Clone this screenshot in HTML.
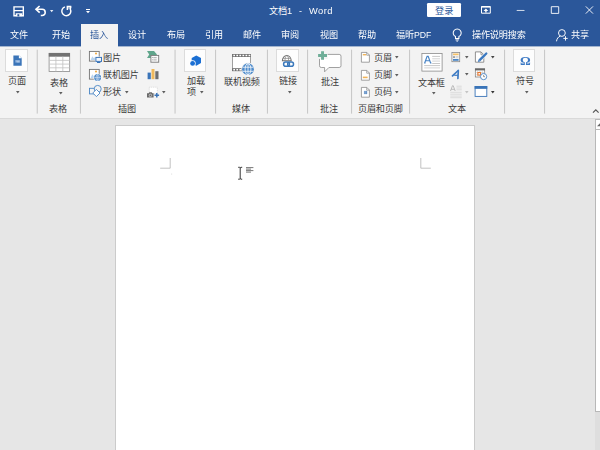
<!DOCTYPE html>
<html lang="zh-CN"><head><meta charset="utf-8"><title>文档1 - Word</title>
<style>
*{box-sizing:border-box;margin:0;padding:0}
html,body{width:600px;height:450px;overflow:hidden;background:#e6e6e6;font-family:"Liberation Sans",sans-serif}
#app{position:relative;width:600px;height:450px;overflow:hidden;background:#e6e6e6}
.titlebar,.tabs,.ribbon,.work{position:absolute;left:0;top:0;width:600px;height:450px}
.titlebar::before{content:"";position:absolute;left:0;top:0;width:600px;height:46px;background:#2b579a;border-bottom:0}
.titlebar::after{content:"";position:absolute;left:0;top:46px;width:600px;height:1px;background:#a3b5cf;z-index:1}
.tab-active{position:absolute;left:81px;top:24px;width:37px;height:23px;background:#f3f3f3;z-index:2}
.ribbon::before{content:"";position:absolute;left:0;top:46px;width:600px;height:72px;background:#f3f3f3;border-bottom:1px solid #d9d9d9}
.lb{position:absolute;display:block;line-height:0;white-space:nowrap}
.lb svg{display:block;fill:currentColor;overflow:visible}
.lb svg text{font-family:"Liberation Sans","Noto Sans CJK SC",sans-serif;font-size:9.15px;letter-spacing:-.15px;fill:currentColor;stroke:none}
.tab{z-index:3}
.lt{position:absolute;display:block;white-space:nowrap;will-change:transform}
.ls{letter-spacing:.5px}
.ic{position:absolute;display:block;overflow:visible}
.sep{position:absolute;top:50px;width:1px;height:63.5px;background:#d1d1d1}
.bbox{position:absolute;top:49.3px;width:22.6px;height:22.4px;background:#fdfdfd;border:.75px solid #dcdcdc}
.login{position:absolute;left:427px;top:3px;width:34.2px;height:14.1px;background:#fff;border-radius:1.2px}
.page{position:absolute;left:115px;top:125px;width:360px;height:330px;background:#fff;border:1px solid #cbcbcb}
.vscroll{position:absolute;left:595px;top:119.3px;width:6px;height:331px;background:#dedede}
.sb-up{position:absolute;left:0;top:0;width:6px;height:10.7px;background:#fff;border:.8px solid #b8b8b8}
.sb-thumb{position:absolute;left:0;top:10.7px;width:6px;height:282px;background:#fff;border:.8px solid #b8b8b8;border-top:none}
</style></head>
<body>
<div id="app">
<div class="titlebar">
<svg class="ic " style="left:12px;top:5px" width="14" height="13" viewBox="12 5 14 13" aria-hidden="true">
<path d="M14 6.9h9.3v8.8H14z" fill="none" stroke="#fff" stroke-width="1.4"/>
<path d="M14 10h9.3v1.25H14z" fill="#fff"/>
<path d="M15.7 13.2h6.6v3h-6.6z" fill="#fff"/>
<path d="M17.4 14.2h1.9v2.2h-1.9z" fill="#2b579a"/>
</svg>
<svg class="ic " style="left:34px;top:5px" width="14" height="12" viewBox="34 5 14 12" aria-hidden="true">
<path d="M39.6 6L36 9.3l3.7 3.3" fill="none" stroke="#fff" stroke-width="1.65" stroke-linejoin="miter"/>
<path d="M36.4 9.3h5.7a3.1 3.1 0 0 1 0 6.2h-1.3" fill="none" stroke="#fff" stroke-width="1.6"/>
</svg>
<svg class="ic arr" style="left:48.6px;top:8.6px" width="5.4" height="4.2" viewBox="48.6 8.6 5.4 4.2" aria-hidden="true"><path d="M49.6 9.6h3.4l-1.7 2.2z" fill="#e8eef7"/></svg>
<svg class="ic " style="left:60px;top:5px" width="13" height="12" viewBox="60 5 13 12" aria-hidden="true">
<path d="M64.9 6.9A4.5 4.5 0 1 0 70.3 9.1L70.8 6.6" fill="none" stroke="#fff" stroke-width="1.45" stroke-linejoin="round"/>
<path d="M67.3 10.1V6.5H71.3" fill="none" stroke="#fff" stroke-width="1.35"/>
<path d="M67.3 6.5h3.6l-.5 2.3-3.1 1z" fill="#fff" opacity=".45"/>
</svg>
<svg class="ic " style="left:85px;top:8px" width="6" height="6" viewBox="85 8 6 6" aria-hidden="true"><path d="M86 9h4v.9h-4zM86 11h4l-2 2.3z" fill="#fff"/></svg>
<span class="lb " style="left:268px;top:6.42px;color:#fff"><svg width="20" height="10.98"><text x="0.92" y="8.05" font-size="9.15">文档</text></svg></span>
<span class="lt " style="left:287.4px;top:5.75px;color:#fff;font-size:9.3px;line-height:10.7px;font-weight:400;font-family:'Liberation Sans',sans-serif">1</span>
<span class="lt " style="left:298.9px;top:5.83px;color:#fff;font-size:9px;line-height:10.35px;font-weight:400;font-family:'Liberation Sans',sans-serif">-</span>
<span class="lt ls" style="left:308.9px;top:5.75px;color:#fff;font-size:9.3px;line-height:10.7px;font-weight:400;font-family:'Liberation Sans',sans-serif">Word</span>
<div class="login"></div>
<span class="lb " style="left:433.6px;top:5.83px;color:#2b579a"><svg width="20.6" height="10.98"><text x="1.08" y="8.05" font-size="9.15" style="letter-spacing:.15px">登录</text></svg></span>
<svg class="ic " style="left:480px;top:5px" width="12" height="10" viewBox="480 5 12 10" aria-hidden="true">
<path d="M481.5 6.5h8.8v6.7h-8.8z" fill="none" stroke="#fff" stroke-width="1"/>
<path d="M481.5 6.2h8.8v1.4h-8.8z" fill="#fff"/>
<path d="M485.9 8.6l2.4 2.3h-1.7v1.6h-1.4v-1.6h-1.7z" fill="#fff"/>
</svg>
<svg class="ic " style="left:516px;top:9px" width="10" height="3" viewBox="516 9 10 3" aria-hidden="true"><path d="M516.7 9.950h7.8v.8h-7.8z" fill="#fff"/></svg>
<svg class="ic " style="left:550px;top:5px" width="10" height="10" viewBox="550 5 10 10" aria-hidden="true"><path d="M551.3 6.7h7.4v6.7h-7.4z" fill="none" stroke="#fff" stroke-width=".9"/></svg>
<svg class="ic " style="left:585px;top:5px" width="10" height="10" viewBox="585 5 10 10" aria-hidden="true"><path d="M585.8 6.4l7.2 7.2M593 6.4l-7.2 7.2" fill="none" stroke="#fff" stroke-width=".9"/></svg>
</div>
<div class="tabs">
<div class="tab-active"></div>
<span class="lb tab" style="left:8.6px;top:29.82px;color:#fff"><svg width="20" height="10.98"><text x="0.92" y="8.05" font-size="9.15">文件</text></svg></span>
<span class="lb tab" style="left:50.8px;top:29.82px;color:#fff"><svg width="20" height="10.98"><text x="0.92" y="8.05" font-size="9.15">开始</text></svg></span>
<span class="lb tab" style="left:89.05px;top:29.82px;color:#2b579a"><svg width="20" height="10.98"><text x="0.92" y="8.05" font-size="9.15">插入</text></svg></span>
<span class="lb tab" style="left:127.3px;top:29.82px;color:#fff"><svg width="20" height="10.98"><text x="0.92" y="8.05" font-size="9.15">设计</text></svg></span>
<span class="lb tab" style="left:165.55px;top:29.82px;color:#fff"><svg width="20" height="10.98"><text x="0.92" y="8.05" font-size="9.15">布局</text></svg></span>
<span class="lb tab" style="left:203.8px;top:29.82px;color:#fff"><svg width="20" height="10.98"><text x="0.92" y="8.05" font-size="9.15">引用</text></svg></span>
<span class="lb tab" style="left:242.05px;top:29.82px;color:#fff"><svg width="20" height="10.98"><text x="0.92" y="8.05" font-size="9.15">邮件</text></svg></span>
<span class="lb tab" style="left:280.3px;top:29.82px;color:#fff"><svg width="20" height="10.98"><text x="0.92" y="8.05" font-size="9.15">审阅</text></svg></span>
<span class="lb tab" style="left:318.55px;top:29.82px;color:#fff"><svg width="20" height="10.98"><text x="0.92" y="8.05" font-size="9.15">视图</text></svg></span>
<span class="lb tab" style="left:356.8px;top:29.82px;color:#fff"><svg width="20" height="10.98"><text x="0.92" y="8.05" font-size="9.15">帮助</text></svg></span>
<span class="lb tab" style="left:394.7px;top:29.82px;color:#fff"><svg width="20" height="10.98"><text x="0.92" y="8.05" font-size="9.15">福昕</text></svg></span>
<span class="lt " style="left:414.2px;top:29.5px;color:#fff;font-size:8.7px;line-height:10px;font-weight:400;font-family:'Liberation Sans',sans-serif">PDF</span>
<svg class="ic " style="left:451px;top:28px" width="12" height="15" viewBox="451 28 12 15" aria-hidden="true">
<path d="M455.5 36.6A4 4 0 1 1 458.9 36.6V38.5H455.5z" fill="none" stroke="#fff" stroke-width="1.05"/>
<path d="M455.5 39.9h3.4M456.4 41.1h1.6" stroke="#fff" stroke-width=".9" fill="none"/>
</svg>
<span class="lb tab" style="left:471.1px;top:29.82px;color:#fff"><svg width="56" height="10.98"><text x="0.92" y="8.05" font-size="9.15">操作说明搜索</text></svg></span>
<svg class="ic " style="left:555px;top:28px" width="14" height="15" viewBox="555 28 14 15" aria-hidden="true">
<circle cx="561.9" cy="33" r="3.4" fill="none" stroke="#fff" stroke-width=".95"/>
<path d="M556.5 41.3c.3-2.6 1.7-4.5 3.9-5.2" fill="none" stroke="#fff" stroke-width=".95"/>
<path d="M563.3 38.4h4.4M565.5 36.2v4.4" stroke="#fff" stroke-width=".95" fill="none"/>
</svg>
<span class="lb tab" style="left:570.1px;top:29.82px;color:#fff"><svg width="20" height="10.98"><text x="0.92" y="8.05" font-size="9.15">共享</text></svg></span>
</div>
<div class="ribbon">
<svg class="ic seps" style="left:0px;top:49px" width="600" height="66" viewBox="0 49 600 66" aria-hidden="true"><rect x="36.7" y="49.7" width="1.1" height="63.9" fill="#c9c9c9"/><rect x="79.9" y="49.7" width="1.1" height="63.9" fill="#c9c9c9"/><rect x="174.5" y="49.7" width="1.1" height="63.9" fill="#c9c9c9"/><rect x="215" y="49.7" width="1.1" height="63.9" fill="#c9c9c9"/><rect x="266.9" y="49.7" width="1.1" height="63.9" fill="#c9c9c9"/><rect x="307" y="49.7" width="1.1" height="63.9" fill="#c9c9c9"/><rect x="351" y="49.7" width="1.1" height="63.9" fill="#c9c9c9"/><rect x="409" y="49.7" width="1.1" height="63.9" fill="#c9c9c9"/><rect x="504" y="49.7" width="1.1" height="63.9" fill="#c9c9c9"/><rect x="544" y="49.7" width="1.1" height="63.9" fill="#c9c9c9"/></svg>
<div class="bbox" style="left:5.1px"></div>
<svg class="ic " style="left:12px;top:54px" width="12" height="13" viewBox="12 54 12 13" aria-hidden="true">
<path d="M13.4 55.4h5.6l2.7 2.7v7.6h-8.3z" fill="#3a74b8"/>
<path d="M18.9 55.3v2.9h2.9z" fill="#f8fbff"/>
<path d="M15.1 60h5.1v2.7h-5.1z" fill="#6f9bd1"/>
<path d="M15.7 60.7h3.9v.5h-3.9zM16.6 61.7h3v.5h-3z" fill="#e6eef8"/>
</svg>
<span class="lb " style="left:7.25px;top:75.72px;color:#3b3b3b"><svg width="20" height="10.98"><text x="0.92" y="8.05" font-size="9.15">页面</text></svg></span>
<svg class="ic arr" style="left:15.2px;top:89.5px" width="5.6" height="4.4" viewBox="15.2 89.5 5.6 4.4" aria-hidden="true"><path d="M16.2 90.5h3.6l-1.8 2.4z" fill="#5e5e5e"/></svg>
<svg class="ic " style="left:48px;top:52px" width="23" height="21" viewBox="48 52 23 21" aria-hidden="true">
<rect x="49.1" y="53.3" width="20.6" height="18.1" fill="#fff" stroke="#8a8a8a" stroke-width=".8"/>
<rect x="48.8" y="53" width="21.2" height="3.7" fill="#737373"/>
<path d="M49.2 60.4h20.4M49.2 64.1h20.4M49.2 67.8h20.4M55.9 56.6v14.8M62.8 56.6v14.8" stroke="#c2c2c2" stroke-width=".8" fill="none"/>
</svg>
<span class="lb " style="left:49px;top:77.62px;color:#3b3b3b"><svg width="20" height="10.98"><text x="0.92" y="8.05" font-size="9.15">表格</text></svg></span>
<svg class="ic arr" style="left:57.5px;top:91.1px" width="5.6" height="4.4" viewBox="57.5 91.1 5.6 4.4" aria-hidden="true"><path d="M58.5 92.1h3.6l-1.8 2.4z" fill="#5e5e5e"/></svg>
<span class="lb grp" style="left:48.3px;top:104.33px;color:#3b3b3b"><svg width="20" height="10.98"><text x="0.92" y="8.05" font-size="9.15">表格</text></svg></span>
<svg class="ic " style="left:88px;top:50px" width="15" height="15" viewBox="88 50 15 15" aria-hidden="true">
<rect x="89.4" y="51.4" width="9.8" height="9.7" fill="#fff" stroke="#727272" stroke-width=".9"/>
<circle cx="96" cy="53.6" r="1" fill="#f0a63a"/>
<path d="M90.6 59.9l1.7-3.6 1.2 1.8 .9-.9 1.4 2.7z" fill="#b9d3ee"/>

<rect x="95.2" y="56.6" width="6.6" height="5.3" fill="#fff"/>
<rect x="95.9" y="57.4" width="5.6" height="4" fill="#f3f7fc" stroke="#3a74b8" stroke-width="1"/>
<path d="M97 62h3.4v1h-3.4z" fill="#3a74b8"/>
</svg>
<span class="lb " style="left:102.1px;top:52.52px;color:#3b3b3b"><svg width="20" height="10.98"><text x="0.92" y="8.05" font-size="9.15">图片</text></svg></span>
<svg class="ic " style="left:88px;top:67.5px" width="15" height="15" viewBox="88 67.5 15 15" aria-hidden="true">
<rect x="89.4" y="68.9" width="9.8" height="9.7" fill="#fff" stroke="#727272" stroke-width=".9"/>
<circle cx="96" cy="71.1" r="1" fill="#f0a63a"/>
<path d="M90.6 77.4l1.7-3.6 1.2 1.8 .9-.9 1.4 2.7z" fill="#b9d3ee"/>

<circle cx="97.6" cy="77.1" r="4.1" fill="#fff"/>
<circle cx="97.6" cy="77.1" r="3.5" fill="#4a86c5"/>
<path d="M94.3 77.1h6.6M97.6 73.8v6.6" stroke="#dfeaf6" stroke-width=".6" fill="none"/>
<ellipse cx="97.6" cy="77.1" rx="1.5" ry="3.3" fill="none" stroke="#dfeaf6" stroke-width=".6"/>
</svg>
<span class="lb " style="left:102.1px;top:70.02px;color:#3b3b3b"><svg width="38" height="10.98"><text x="0.92" y="8.05" font-size="9.15">联机图片</text></svg></span>
<svg class="ic " style="left:88px;top:84px" width="15" height="14" viewBox="88 84 15 14" aria-hidden="true">
<rect x="89.5" y="88.3" width="6.6" height="5.6" fill="none" stroke="#4a86c5" stroke-width=".9"/>
<circle cx="97.7" cy="88.9" r="3.5" fill="#f3f3f3" stroke="#4a86c5" stroke-width=".9"/>
<path d="M96.4 89.4l3.6 3.6-3.6 3.6-3.6-3.6z" fill="#fff" stroke="#4a86c5" stroke-width=".9"/>
</svg>
<span class="lb " style="left:102.1px;top:87.02px;color:#3b3b3b"><svg width="20" height="10.98"><text x="0.92" y="8.05" font-size="9.15">形状</text></svg></span>
<svg class="ic arr" style="left:123.5px;top:90px" width="5.6" height="4.4" viewBox="123.5 90 5.6 4.4" aria-hidden="true"><path d="M124.5 91h3.6l-1.8 2.4z" fill="#5e5e5e"/></svg>
<svg class="ic " style="left:146px;top:50px" width="14" height="14" viewBox="146 50 14 14" aria-hidden="true">
<path d="M147 51h7l3 3.5-1.5 1.7H151v1.8h-4l2.2-3.5z" fill="#5fa58b"/>
<rect x="150.9" y="55.4" width="7.8" height="6.8" fill="#fbfbfb" stroke="#7a7a7a" stroke-width=".9"/>
<path d="M153.3 57.7h3.4M153.3 59.9h3.4" stroke="#8a8a8a" stroke-width=".7" fill="none"/>
<path d="M152.2 57.3h.8v.8h-.8zM152.2 59.5h.8v.8h-.8z" fill="#8a8a8a"/>
</svg>
<svg class="ic " style="left:146px;top:68px" width="14" height="12" viewBox="146 68 14 12" aria-hidden="true">
<rect x="147.6" y="72.6" width="3.2" height="6.6" fill="#3a74b8"/>
<rect x="151.5" y="69" width="3" height="10.2" fill="#f0b95c"/>
<rect x="155.3" y="71.2" width="3.2" height="8" fill="#6e6e6e"/>
</svg>
<svg class="ic " style="left:146px;top:86px" width="14" height="13" viewBox="146 86 14 13" aria-hidden="true">
<rect x="149.3" y="87.2" width="8" height="6.2" fill="#fff" stroke="#c9c9c9" stroke-width=".6" stroke-dasharray="1 .8"/>
<path d="M147 93.3h1.6l.7-1.1h2.4l.7 1.1h1.2v4.3H147z" fill="#6a6a6a"/>
<circle cx="150.4" cy="95.4" r="1.25" fill="none" stroke="#eee" stroke-width=".6"/>
<path d="M154.5 95.3h4.6M156.8 93v4.6" stroke="#3a74b8" stroke-width="1.5" fill="none"/>
</svg>
<svg class="ic arr" style="left:161px;top:89.5px" width="5.6" height="4.4" viewBox="161 89.5 5.6 4.4" aria-hidden="true"><path d="M162 90.5h3.6l-1.8 2.4z" fill="#5e5e5e"/></svg>
<span class="lb grp" style="left:117.3px;top:104.33px;color:#3b3b3b"><svg width="20" height="10.98"><text x="0.92" y="8.05" font-size="9.15">插图</text></svg></span>
<div class="bbox" style="left:183.9px"></div>
<svg class="ic " style="left:190px;top:54px" width="13" height="13" viewBox="190 54 13 13" aria-hidden="true">
<path d="M196.3 55.4l4.7 2.5v5.2l-4.7 2.6-4.6-2.6v-5.2z" fill="#1b6fd3"/>
<circle cx="192.6" cy="63.4" r="3.1" fill="#fff"/>
<circle cx="192.6" cy="63.4" r="2.4" fill="#1b6fd3"/>
</svg>
<span class="lb " style="left:185.5px;top:75.72px;color:#3b3b3b"><svg width="20" height="10.98"><text x="0.92" y="8.05" font-size="9.15">加载</text></svg></span>
<span class="lb " style="left:186.1px;top:87.02px;color:#3b3b3b"><svg width="11" height="10.98"><text x="0.92" y="8.05" font-size="9.15">项</text></svg></span>
<svg class="ic arr" style="left:198.5px;top:89.5px" width="5.6" height="4.4" viewBox="198.5 89.5 5.6 4.4" aria-hidden="true"><path d="M199.5 90.5h3.6l-1.8 2.4z" fill="#5e5e5e"/></svg>
<svg class="ic " style="left:231px;top:53px" width="24" height="23" viewBox="231 53 24 23" aria-hidden="true">
<rect x="232.5" y="54.5" width="18.1" height="16.2" fill="#fff" stroke="#8a8a8a" stroke-width=".8"/>
<rect x="232.1" y="54.1" width="18.9" height="2.9" fill="#6e6e6e"/>
<rect x="232.1" y="68.2" width="18.9" height="2.9" fill="#6e6e6e"/>
<path d="M233.3 55.55h17.5" stroke="#fff" stroke-width="1.5" stroke-dasharray="1.75 1.3" fill="none"/>
<path d="M233.3 69.65h17.5" stroke="#fff" stroke-width="1.5" stroke-dasharray="1.75 1.3" fill="none"/>
<circle cx="248" cy="69.2" r="6.7" fill="#f3f3f3"/>
<circle cx="248" cy="69.2" r="5.9" fill="#4f8ccc"/>
<path d="M242.6 67.2h10.8M242.6 71.3h10.8M248 63.5v11.4" stroke="#f4f8fc" stroke-width=".85" fill="none"/>
<ellipse cx="248" cy="69.2" rx="2.9" ry="5.6" fill="none" stroke="#f4f8fc" stroke-width=".85"/>
</svg>
<span class="lb " style="left:222.5px;top:77.22px;color:#3b3b3b"><svg width="38" height="10.98"><text x="0.92" y="8.05" font-size="9.15">联机视频</text></svg></span>
<span class="lb grp" style="left:231.05px;top:104.33px;color:#3b3b3b"><svg width="20" height="10.98"><text x="0.92" y="8.05" font-size="9.15">媒体</text></svg></span>
<div class="bbox" style="left:276.4px"></div>
<svg class="ic " style="left:281px;top:54px" width="14" height="14" viewBox="281 54 14 14" aria-hidden="true">
<path d="M282.4 60.8a4.4 5.4 0 0 1 8.8 0z" fill="#fff" stroke="#6e6e6e" stroke-width="1.05"/>
<path d="M284.9 60.8a1.9 5.2 0 0 1 3.8 0M282.9 58.4h7.8" fill="none" stroke="#8a8a8a" stroke-width=".75"/>
<rect x="283.6" y="62.1" width="5.8" height="4.1" rx="2.05" fill="none" stroke="#3a78bb" stroke-width="1.5"/>
<rect x="287.7" y="62.1" width="5.8" height="4.1" rx="2.05" fill="none" stroke="#3a78bb" stroke-width="1.5"/>
</svg>
<span class="lb " style="left:278px;top:75.72px;color:#3b3b3b"><svg width="20" height="10.98"><text x="0.92" y="8.05" font-size="9.15">链接</text></svg></span>
<svg class="ic arr" style="left:286.5px;top:89.5px" width="5.6" height="4.4" viewBox="286.5 89.5 5.6 4.4" aria-hidden="true"><path d="M287.5 90.5h3.6l-1.8 2.4z" fill="#5e5e5e"/></svg>
<svg class="ic " style="left:317px;top:50px" width="26" height="24" viewBox="317 50 26 24" aria-hidden="true">
<path d="M321.3 54.4h17.9a1.8 1.8 0 0 1 1.8 1.8v9.5a1.8 1.8 0 0 1 -1.8 1.8h-10.3l-4.3 4.3v-4.3h-3.3a1.8 1.8 0 0 1 -1.8 -1.8v-9.5a1.8 1.8 0 0 1 1.8 -1.8z" fill="#fff" stroke="#8a8a8a" stroke-width=".8"/>
<path d="M317.3 51.6h10.3v7.3h-10.3z" fill="#f3f3f3"/>
<path d="M321.1 51.2h2.9v2.8h3v2.9h-3v2.8h-2.9v-2.8h-3v-2.9h3z" fill="#6fae98"/>
</svg>
<span class="lb " style="left:320px;top:77.22px;color:#3b3b3b"><svg width="20" height="10.98"><text x="0.92" y="8.05" font-size="9.15">批注</text></svg></span>
<span class="lb grp" style="left:319.3px;top:104.33px;color:#3b3b3b"><svg width="20" height="10.98"><text x="0.92" y="8.05" font-size="9.15">批注</text></svg></span>
<svg class="ic " style="left:360px;top:51px" width="11" height="13" viewBox="360 51 11 13" aria-hidden="true"><path d="M361.4 52.4h5.4l2.6 2.6v7.2h-8z" fill="#fff" stroke="#8a8a8a" stroke-width=".8"/><path d="M366.7 52.5v2.7h2.7" fill="none" stroke="#8a8a8a" stroke-width=".7"/><rect x="362.8" y="54" width="3.3" height="1.4" fill="#f0b45a"/></svg>
<span class="lb " style="left:373.1px;top:52.72px;color:#3b3b3b"><svg width="20" height="10.98"><text x="0.92" y="8.05" font-size="9.15">页眉</text></svg></span>
<svg class="ic arr" style="left:394.3px;top:55.2px" width="5.6" height="4.4" viewBox="394.3 55.2 5.6 4.4" aria-hidden="true"><path d="M395.3 56.2h3.6l-1.8 2.4z" fill="#5e5e5e"/></svg>
<svg class="ic " style="left:360px;top:68.5px" width="11" height="13" viewBox="360 68.5 11 13" aria-hidden="true"><path d="M361.4 69.9h5.4l2.6 2.6v7.2h-8z" fill="#fff" stroke="#8a8a8a" stroke-width=".8"/><path d="M366.7 70v2.7h2.7" fill="none" stroke="#8a8a8a" stroke-width=".7"/><rect x="362.8" y="76.1" width="4.8" height="1.6" fill="#f0b45a"/></svg>
<span class="lb " style="left:373.1px;top:70.22px;color:#3b3b3b"><svg width="20" height="10.98"><text x="0.92" y="8.05" font-size="9.15">页脚</text></svg></span>
<svg class="ic arr" style="left:394.3px;top:72.7px" width="5.6" height="4.4" viewBox="394.3 72.7 5.6 4.4" aria-hidden="true"><path d="M395.3 73.7h3.6l-1.8 2.4z" fill="#5e5e5e"/></svg>
<svg class="ic " style="left:360px;top:85.5px" width="11" height="13" viewBox="360 85.5 11 13" aria-hidden="true"><path d="M361.4 86.9h5.4l2.6 2.6v7.2h-8z" fill="#fff" stroke="#8a8a8a" stroke-width=".8"/><path d="M366.7 87v2.7h2.7" fill="none" stroke="#8a8a8a" stroke-width=".7"/><path d="M364.9 90.3v3.4M366.3 90.3v3.4M363.9 91.4h3.4M363.9 92.7h3.4" stroke="#3a74b8" stroke-width=".7" fill="none"/></svg>
<span class="lb " style="left:373.1px;top:87.22px;color:#3b3b3b"><svg width="20" height="10.98"><text x="0.92" y="8.05" font-size="9.15">页码</text></svg></span>
<svg class="ic arr" style="left:394.3px;top:89.7px" width="5.6" height="4.4" viewBox="394.3 89.7 5.6 4.4" aria-hidden="true"><path d="M395.3 90.7h3.6l-1.8 2.4z" fill="#5e5e5e"/></svg>
<span class="lb grp" style="left:356.55px;top:104.33px;color:#3b3b3b"><svg width="47" height="10.98"><text x="0.92" y="8.05" font-size="9.15">页眉和页脚</text></svg></span>
<svg class="ic " style="left:420px;top:52px" width="24" height="21" viewBox="420 52 24 21" aria-hidden="true">
<rect x="421.9" y="53.4" width="20.2" height="17.7" fill="#fff" stroke="#8a8a8a" stroke-width=".8"/>
<path d="M432.2 56.4h7.9M432.2 63.5h7.9M424.2 65.6h15.9" stroke="#b9b9b9" stroke-width=".8" fill="none"/><path d="M432.2 58.8h7.9M432.2 61.1h7.9M424.2 67.9h15.9" stroke="#cfcfcf" stroke-width=".9" fill="none"/>
<path d="M424.7 63l2.4-6.7h1.1l2.4 6.7M425.7 60.7h3.9M424.1 63h1.5M430 63h1.5" fill="none" stroke="#4784c6" stroke-width="1.15"/>
</svg>
<span class="lb " style="left:417px;top:77.62px;color:#3b3b3b"><svg width="29" height="10.98"><text x="0.92" y="8.05" font-size="9.15">文本框</text></svg></span>
<svg class="ic arr" style="left:430.5px;top:91px" width="5.6" height="4.4" viewBox="430.5 91 5.6 4.4" aria-hidden="true"><path d="M431.5 92h3.6l-1.8 2.4z" fill="#5e5e5e"/></svg>
<svg class="ic " style="left:450px;top:51px" width="12" height="13" viewBox="450 51 12 13" aria-hidden="true">
<rect x="451.9" y="52.4" width="7.8" height="9.3" fill="#f7f7f7" stroke="#8a8a8a" stroke-width=".8"/>
<rect x="453" y="53.5" width="5.6" height="1.7" fill="#f5c169"/>
<rect x="453" y="59" width="5.6" height="1.8" fill="#4a86c5"/>
<rect x="453.2" y="56.2" width="1.6" height="1.8" fill="#8a8a8a"/>
<path d="M455.6 56.5h2.8M455.6 57.7h2.8" stroke="#b5b5b5" stroke-width=".5"/>
</svg>
<svg class="ic arr" style="left:464px;top:55.1px" width="5.6" height="4.4" viewBox="464 55.1 5.6 4.4" aria-hidden="true"><path d="M465 56.1h3.6l-1.8 2.4z" fill="#5e5e5e"/></svg>
<svg class="ic " style="left:474px;top:50px" width="14" height="14" viewBox="474 50 14 14" aria-hidden="true">
<path d="M475.4 51.9h5.6l2.8 2.8v7.5h-8.4z" fill="#fff" stroke="#777" stroke-width=".8"/>
<path d="M481 52v2.8h2.8" fill="none" stroke="#777" stroke-width=".7"/>
<path d="M479.4 60.4L486 53.8" stroke="#f3f3f3" stroke-width="3.3" fill="none"/>
<path d="M479.4 60.4L485.2 54.6" stroke="#3a78c0" stroke-width="2.3" fill="none"/>
<path d="M485.6 54.2l.7-.7" stroke="#3a78c0" stroke-width="2.3" stroke-linecap="round" fill="none"/>
<path d="M477.9 61.9l.6-2.5 1.9 1.9z" fill="#3a78c0"/>
</svg>
<svg class="ic arr" style="left:490.2px;top:55.1px" width="5.6" height="4.4" viewBox="490.2 55.1 5.6 4.4" aria-hidden="true"><path d="M491.2 56.1h3.6l-1.8 2.4z" fill="#444"/></svg>
<svg class="ic " style="left:450px;top:68px" width="12" height="12" viewBox="450 68 12 12" aria-hidden="true">
<path d="M452.5 75.9L458.2 70.5" stroke="#3f7cc4" stroke-width="1.7" stroke-linecap="round" fill="none"/>
<path d="M458.3 70.5L457.9 78.5" stroke="#3f7cc4" stroke-width="1.7" stroke-linecap="round" fill="none"/>
<path d="M454.2 75.3h3.8" stroke="#3f7cc4" stroke-width="1.2" fill="none"/>
</svg>
<svg class="ic arr" style="left:464px;top:72.1px" width="5.6" height="4.4" viewBox="464 72.1 5.6 4.4" aria-hidden="true"><path d="M465 73.1h3.6l-1.8 2.4z" fill="#5e5e5e"/></svg>
<svg class="ic " style="left:474px;top:67px" width="15" height="14" viewBox="474 67 15 14" aria-hidden="true">
<rect x="475.3" y="68.8" width="9.4" height="8.2" fill="#fff" stroke="#777" stroke-width=".7"/>
<rect x="475" y="68.5" width="10" height="1.9" fill="#666"/>
<path d="M475.5 72.6h9M475.5 74.8h9M477.6 70.5v6.3M479.9 70.5v6.3M482.3 70.5v6.3" stroke="#bbb" stroke-width=".5" fill="none"/>
<rect x="477.9" y="72.5" width="2.6" height="2.6" fill="#fff" stroke="#e8772e" stroke-width="1.1"/>
<circle cx="483.6" cy="76.6" r="3.1" fill="#fff" stroke="#4a86c5" stroke-width=".9"/>
<path d="M483.6 74.9v1.8h1.4" stroke="#555" stroke-width=".6" fill="none"/>
</svg>
<svg class="ic " style="left:449px;top:84px" width="14" height="15" viewBox="449 84 14 15" aria-hidden="true">
<path d="M450.5 91l2-5.3h.7l2 5.3M451.2 89.3h3.3" fill="none" stroke="#b2b2b2" stroke-width=".85"/>
<path d="M456.5 86.2h5.2M456.5 88h5.2M456.5 89.8h5.2M450.3 92.3h11.4M450.3 94.2h11.4M450.3 96.1h11.4M450.3 97.7h11.4" stroke="#d4d4d4" stroke-width=".8" fill="none"/>
</svg>
<svg class="ic arr" style="left:464px;top:89.5px" width="5.6" height="4.4" viewBox="464 89.5 5.6 4.4" aria-hidden="true"><path d="M465 90.5h3.6l-1.8 2.4z" fill="#c4c4c4"/></svg>
<svg class="ic " style="left:474px;top:85px" width="14" height="13" viewBox="474 85 14 13" aria-hidden="true">
<rect x="475.1" y="86.5" width="11.7" height="9.9" fill="#fff" stroke="#3a74b8" stroke-width=".9"/>
<rect x="474.65" y="86.05" width="12.6" height="2.8" fill="#3a74b8"/>
</svg>
<svg class="ic arr" style="left:490.2px;top:89.5px" width="5.6" height="4.4" viewBox="490.2 89.5 5.6 4.4" aria-hidden="true"><path d="M491.2 90.5h3.6l-1.8 2.4z" fill="#333"/></svg>
<span class="lb grp" style="left:446.8px;top:104.33px;color:#3b3b3b"><svg width="20" height="10.98"><text x="0.92" y="8.05" font-size="9.15">文本</text></svg></span>
<div class="bbox" style="left:512.9px"></div>
<span class="lt omega" style="left:519.5px;top:53.09px;color:#3b78c3;font-size:13.4px;line-height:15.41px;font-weight:700;font-family:'Liberation Serif',serif">Ω</span>
<span class="lb " style="left:514.75px;top:75.72px;color:#3b3b3b"><svg width="20" height="10.98"><text x="0.92" y="8.05" font-size="9.15">符号</text></svg></span>
<svg class="ic arr" style="left:523.5px;top:89.5px" width="5.6" height="4.4" viewBox="523.5 89.5 5.6 4.4" aria-hidden="true"><path d="M524.5 90.5h3.6l-1.8 2.4z" fill="#5e5e5e"/></svg>
<svg class="ic " style="left:591px;top:108px" width="9" height="6" viewBox="591 108 9 6" aria-hidden="true"><path d="M593 112.6l2.8-2.8 2.8 2.8" fill="none" stroke="#555" stroke-width="1.2"/></svg>
</div>
<div class="work">
<div class="page">
</div>
<svg class="ic " style="left:159px;top:157px" width="14" height="19" viewBox="159 157 14 19" aria-hidden="true">
<path d="M170.2 158v10.2h-10" fill="none" stroke="#b3b3b3" stroke-width=".8"/>
<rect x="171.4" y="173.6" width=".7" height=".9" fill="#c8c8c8"/>
</svg>
<svg class="ic " style="left:419px;top:157px" width="13" height="13" viewBox="419 157 13 13" aria-hidden="true"><path d="M420.8 158v10.2h10" fill="none" stroke="#b3b3b3" stroke-width=".8"/></svg>
<svg class="ic " style="left:237px;top:166px" width="18" height="15" viewBox="237 166 18 15" aria-hidden="true">
<path d="M238.2 167.3h1.3l.7.5.7-.500h1.3M238.2 179.2h1.3l.7-.500.7.5h1.3M240.2 167.6v11.3" fill="none" stroke="#333" stroke-width="1"/>
<path d="M246 167.6h7.4M246 169.1h5M246 170.6h7.4M246 172.1h5" stroke="#555" stroke-width=".8" fill="none"/>
</svg>
<div class="vscroll"><div class="sb-up"></div><div class="sb-thumb"></div></div>
<svg class="ic " style="left:596px;top:122px" width="4" height="6" viewBox="596 122 4 6" aria-hidden="true"><path d="M597 126.3l3-3v3z" fill="#666"/></svg>
</div>
</div>
</body></html>
